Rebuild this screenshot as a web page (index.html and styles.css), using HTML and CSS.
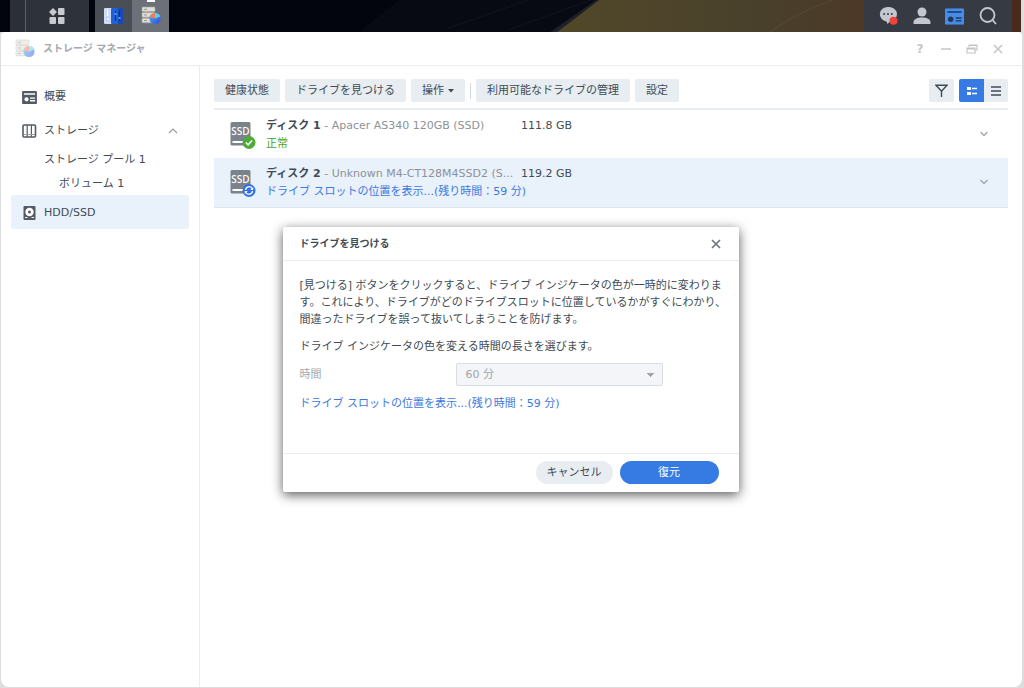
FILE: index.html
```
<!DOCTYPE html>
<html lang="ja">
<head>
<meta charset="utf-8">
<meta name="viewport" content="width=device-width, initial-scale=1">
<title>ストレージ マネージャ</title>
<link rel="stylesheet" href="styles.css">
</head>
<body>
<svg class="defs" aria-hidden="true">
  <defs>
    <linearGradient id="pie" x1="0" y1="0" x2="1" y2="1"><stop offset="0" stop-color="#49b4f5"/><stop offset="1" stop-color="#3048dc"/></linearGradient>
    <symbol id="manager" viewBox="0 0 20 20">
      <g fill="#dedfdc" stroke="#aaa99f" stroke-width=".6"><rect x="1" y="1" width="13" height="4.6" rx=".8"/><rect x="1" y="6.6" width="13" height="4.6" rx=".8"/><rect x="1" y="12.2" width="13" height="4.6" rx=".8"/></g>
      <path d="M3 3.4h3M3 9h3M3 14.6h3" stroke="#99958b" stroke-width="1"/>
      <path d="M5.5 1v15.8" stroke="#c2bfb5" stroke-width=".7"/>
      <circle cx="14" cy="12.500" r="5.6" fill="url(#pie)"/>
      <path d="M14 12.500V6.900A5.600 5.600 0 0 0 8.600 11Z" fill="#f08052"/>
      <path d="M14 12.500V6.900A5.600 5.600 0 0 1 19.300 10.500Z" fill="#5dcdef"/>
    </symbol>
    <symbol id="panel" viewBox="0 0 16 14"><path fill="currentColor" fill-rule="evenodd" d="M1 0h14a1 1 0 0 1 1 1v12a1 1 0 0 1-1 1H1a1 1 0 0 1-1-1V1a1 1 0 0 1 1-1ZM2 2.500v1.500h12V2.500ZM2.500 9a2.300 2.300 0 1 0 4.600 0a2.300 2.300 0 1 0-4.600 0ZM8.500 7v1.400H14V7ZM8.500 9.800v1.400H14V9.800Z"/></symbol>
    <symbol id="widget" viewBox="0 0 16 14"><rect width="16" height="14" rx="1" fill="#438df0"/><path d="M2 3.200h12M9 8.200h5M9 10.700h5" stroke="#25364f" stroke-width="1.200"/><circle cx="4.800" cy="9.400" r="2.300" fill="#25364f"/></symbol>
    <symbol id="ssd" viewBox="0 0 26 28">
      <path d="M2 0h17a1.500 1.500 0 0 1 1.500 1.500V22a1.500 1.500 0 0 1-1.500 1.500H2A1.500 1.500 0 0 1 .5 22V1.500A1.500 1.500 0 0 1 2 0Z" fill="#7a828a"/>
      <path d="M2.500 19H14v2H2.500Z" fill="#fff"/>
      <text x="10.500" y="13" text-anchor="middle" class="ssd-text">SSD</text>
    </symbol>
    <symbol id="down" viewBox="0 0 10 8"><path d="M1.500 2 5 5.500 8.500 2" fill="none" stroke="#a0a5aa" stroke-width="1.300"/></symbol>
  </defs>
</svg>

<header class="taskbar">
  <svg class="wallpaper" viewBox="0 0 1024 32" preserveAspectRatio="none" aria-hidden="true">
    <defs><linearGradient id="sand"><stop offset="0" stop-color="#514829"/><stop offset=".45" stop-color="#49402c"/><stop offset=".7" stop-color="#4d3727"/><stop offset="1" stop-color="#4a291e"/></linearGradient></defs>
    <path d="M0 0h1024v32H0Z" fill="#02050d"/>
    <path d="M400 0h202l-45 32H360Z" fill="#070a12"/>
    <path d="M450 28 530 0M510 30 592 0" stroke="#12151e"/>
    <path d="M598 0 552 32h8L602 0Z" fill="#20202a"/>
    <path d="M601 0h423v32H559Z" fill="url(#sand)"/>
    <path d="M772 32Q800 12 835 0" stroke="#564936" fill="none"/>
  </svg>
  <div class="task-left">
    <button class="main-menu" aria-label="メインメニュー"><svg width="18" height="16" viewBox="0 0 18 16" fill="#c7cad0"><path d="M5 0 9 4 5 8 1 4Z"/><rect x="10" y="0" width="6.500" height="7" rx="1"/><rect x="1.500" y="9" width="6.500" height="7" rx="1"/><rect x="10" y="9" width="6.500" height="7" rx="1"/></svg></button>
    <div class="apps">
      <button class="app" aria-label="コントロールパネル"><svg width="20" height="18" viewBox="0 0 20 18"><rect x="0" y="1" width="9" height="16" rx="1" fill="#cfdcf5"/><rect x="7" y="1" width="12" height="16" rx="1" fill="#2360d8"/><rect x="14" y="1" width="5" height="16" fill="#164bb5"/><circle cx="4" cy="12" r="1.800" fill="#f6f8fc" stroke="#96add5" stroke-width=".5"/><path d="M3.500 3v6" stroke="#fff"/><path d="M11.500 4v10M15.500 4v10" stroke="#102e78"/><path d="M10.500 7h2M14.500 11h2" stroke="#5a9cf0" stroke-width="2"/></svg></button>
      <button class="app app-active" aria-label="ストレージ マネージャ"><svg width="20" height="20"><use href="#manager"/></svg></button>
    </div>
  </div>
  <div class="task-right">
    <button class="tray" aria-label="通知"><svg width="20" height="20" viewBox="0 0 20 20"><path d="M9 1a8 7.300 0 0 1 2 14.500L8.500 18 7.500 15.500A8 7.300 0 0 1 9 1Z" fill="#c3c7d0"/><g fill="#383c44"><circle cx="5.200" cy="8" r="1"/><circle cx="9" cy="8" r="1"/><circle cx="12.800" cy="8" r="1"/></g><circle cx="14.500" cy="14.800" r="4" fill="#ee4439"/></svg></button>
    <button class="tray" aria-label="ユーザー"><svg width="20" height="20" viewBox="0 0 20 20" fill="#c3c7d0"><circle cx="10" cy="6" r="4.500"/><path d="M1.500 18v-1.500C1.500 13 5 11.500 10 11.500s8.500 1.500 8.500 5V18Z"/></svg></button>
    <button class="tray" aria-label="ウィジェット"><svg width="19" height="17" viewBox="0 0 16 14"><use href="#widget"/></svg></button>
    <button class="tray" aria-label="検索"><svg width="20" height="20" viewBox="0 0 20 20" fill="none" stroke="#c3c7d0" stroke-width="1.800"><circle cx="9.500" cy="9" r="7"/><path d="m14.500 14 3.500 4"/></svg></button>
  </div>
</header>

<div class="window">
  <div class="titlebar">
    <svg class="title-icon" width="20" height="20"><use href="#manager"/></svg>
    <h1 class="title">ストレージ マネージャ</h1>
    <div class="window-tools">
      <button class="tool" aria-label="ヘルプ">?</button>
      <button class="tool" aria-label="最小化"><svg width="12" height="12"><path d="M1 6h10" stroke="currentColor" stroke-width="1.500"/></svg></button>
      <button class="tool" aria-label="元のサイズ"><svg width="12" height="12" fill="none" stroke="currentColor" stroke-width="1.200"><path d="M3 4V2h8v5H9M1 5h8v5H1ZM1 6h8M3 2.500h8"/></svg></button>
      <button class="tool" aria-label="閉じる"><svg width="12" height="12"><path d="m2 2 8 8M10 2l-8 8" stroke="currentColor" stroke-width="1.600"/></svg></button>
    </div>
  </div>

  <div class="content">
    <nav class="sidebar">
      <a class="nav-item" href="#"><svg class="nav-icon" width="15" height="13"><use href="#panel"/></svg>概要</a>
      <a class="nav-item" href="#"><svg class="nav-icon" width="15" height="14" viewBox="0 0 15 14"><rect x="1" y="1" width="12.500" height="12" rx="1" fill="none" stroke="#545b63" stroke-width="1.600"/><path d="M5.200 1v12M9.400 1v12" stroke="#545b63" stroke-width="1.200"/><path d="M2 10.500h11" stroke="#9a9fa4" stroke-width="1"/></svg>ストレージ<svg class="nav-arrow" width="10" height="8"><path d="M1 6 5 2l4 4" fill="none" stroke="#959a9f" stroke-width="1.200"/></svg></a>
      <a class="nav-item nav-pool" href="#">ストレージ プール 1</a>
      <a class="nav-item nav-volume" href="#">ボリューム 1</a>
      <a class="nav-item nav-current" href="#" aria-current="page"><svg class="nav-icon" width="15" height="14" viewBox="0 0 15 14"><rect x="1.500" width="12" height="14" rx="1" fill="#545b63"/><circle cx="7.500" cy="6" r="4.200" fill="#fff"/><circle cx="7.500" cy="6" r="1.500" fill="#545b63"/><path d="M3 11.500h2.500M9.500 11.500H12" stroke="#fff"/></svg>HDD/SSD</a>
    </nav>

    <main class="main">
      <div class="toolbar">
        <button class="button">健康状態</button>
        <button class="button">ドライブを見つける</button>
        <button class="button button-menu">操作<svg width="6" height="4"><path d="M0 0h6L3 3.500Z" fill="#414b55"/></svg></button>
        <span class="separator"></span>
        <button class="button">利用可能なドライブの管理</button>
        <button class="button">設定</button>
        <div class="view-tools">
          <button class="icon-button filter" aria-label="フィルター"><svg width="13" height="14" fill="none" stroke="#414b55" stroke-width="1.400"><path d="M1 1.200h11L6.500 7.200ZM6.500 6.500V13"/></svg></button>
          <div class="view-switch">
            <button class="icon-button view-active" aria-label="詳細表示"><svg width="12" height="10" fill="#fff"><path d="M1 1h4v3H1ZM1 6h4v3H1ZM6 1.700h5v1.500H6ZM6 6.700h5v1.500H6Z"/></svg></button>
            <button class="icon-button view-list" aria-label="リスト表示"><svg width="10" height="10"><path d="M0 1h10M0 5h10M0 9h10" stroke="#414b55" stroke-width="1.400"/></svg></button>
          </div>
        </div>
      </div>

      <ul class="drives">
        <li class="drive">
          <svg class="drive-icon" width="26" height="28"><use href="#ssd"/><circle cx="19" cy="20.500" r="6.500" fill="#50aa37"/><path d="m15.800 20.500 2.300 2.300 4-4.300" fill="none" stroke="#fff" stroke-width="1.500"/></svg>
          <div class="drive-info">
            <p class="drive-name"><b>ディスク 1</b> - Apacer AS340 120GB (SSD)</p>
            <p class="drive-state state-normal">正常</p>
          </div>
          <span class="capacity">111.8 GB</span>
          <button class="expand" aria-label="ディスク 1 の詳細"><svg width="10" height="8"><use href="#down"/></svg></button>
        </li>
        <li class="drive drive-selected">
          <svg class="drive-icon" width="26" height="28"><use href="#ssd"/><circle cx="19" cy="20.500" r="6.500" fill="#3274e4"/><path d="M15.500 20a3.600 3.600 0 0 1 6.700-1.500M22.500 21a3.600 3.600 0 0 1-6.700 1.500" fill="none" stroke="#fff" stroke-width="1.300"/><path d="M23.200 17v2.900h-3ZM14.800 24v-2.900h3Z" fill="#fff"/></svg>
          <div class="drive-info">
            <p class="drive-name"><b>ディスク 2</b> - Unknown M4-CT128M4SSD2 (S...</p>
            <p class="drive-state state-locating">ドライブ スロットの位置を表示...(残り時間：59 分)</p>
          </div>
          <span class="capacity">119.2 GB</span>
          <button class="expand" aria-label="ディスク 2 の詳細"><svg width="10" height="8"><use href="#down"/></svg></button>
        </li>
      </ul>
    </main>
  </div>

  <div class="overlay">
    <section class="dialog" role="dialog" aria-labelledby="dialog-title">
      <div class="dialog-header">
        <h2 class="dialog-title" id="dialog-title">ドライブを見つける</h2>
        <button class="dialog-close" aria-label="閉じる"><svg width="10" height="10"><path d="m1 1 8 8M9 1 1 9" stroke="#6f7780" stroke-width="1.700"/></svg></button>
      </div>
      <div class="dialog-body">
        <p class="dialog-text">[見つける] ボタンをクリックすると、ドライブ インジケータの色が一時的に変わります。これにより、ドライブがどのドライブスロットに位置しているかがすぐにわかり、間違ったドライブを誤って抜いてしまうことを防げます。</p>
        <p class="dialog-text">ドライブ インジケータの色を変える時間の長さを選びます。</p>
        <div class="field">
          <label class="field-label" for="duration">時間</label>
          <select class="select" id="duration" disabled><option>60 分</option></select>
        </div>
        <p class="dialog-status">ドライブ スロットの位置を表示...(残り時間：59 分)</p>
      </div>
      <div class="dialog-footer">
        <button class="pill">キャンセル</button>
        <button class="pill pill-primary">復元</button>
      </div>
    </section>
  </div>
</div>
</body>
</html>
```

FILE: styles.css
```
* { box-sizing: border-box; }

body {
  margin: 0;
  min-height: 100vh;
  display: flex;
  flex-direction: column;
  background: #dcdddd;
  color: #414b55;
  font: 11px/16px "DejaVu Sans", "Noto Sans CJK JP", sans-serif;
}

h1, h2, p, ul { margin: 0; padding: 0; }
button { margin: 0; padding: 0; border: 0; background: none; color: inherit; font: inherit; }
svg { display: block; flex: none; }
.defs { position: absolute; width: 0; height: 0; }
.ssd-text { fill: #fff; font: 500 10px "Noto Sans", sans-serif; }

/* Taskbar */
.taskbar {
  position: relative;
  height: 32px;
  margin-right: 3px;
  display: flex;
  justify-content: space-between;
  background: #02050d;
}
.wallpaper { position: absolute; inset: 0; width: 100%; height: 100%; }
.task-left { position: relative; display: flex; gap: 6px; padding-left: 10px; }
.main-menu {
  width: 79px;
  padding-left: 14px;
  display: grid;
  place-items: center;
  background: linear-gradient(90deg, #2b3038 15px, #5b6068 15px, #5b6068 16px, #2d323b 16px);
}
.apps { display: flex; }
.app { width: 37px; display: grid; place-items: center; background: #4a4e56; }
.app-active { background: linear-gradient(#fff, #fff) 50% 0 / 8px 2px no-repeat #6c7078; }
.task-right {
  position: relative;
  display: flex;
  padding: 0 8px 0 8px;
  margin-right: 9px;
  background: #363a42;
}
.tray { width: 33px; display: grid; place-items: center; }

/* Window */
.window {
  position: relative;
  flex: 1;
  display: flex;
  flex-direction: column;
  margin: 0 2px 1px 1px;
  border-radius: 4px 4px 8px 8px;
  background: #fff;
}
.titlebar {
  height: 34px;
  display: flex;
  align-items: center;
  gap: 8px;
  padding: 0 18px 0 14px;
  border-bottom: 1px solid #e8edf1;
}
.title-icon { opacity: .5; }
.title { flex: 1; color: #a5a9ad; font-size: 10px; font-weight: 700; }
.window-tools { display: flex; gap: 14px; color: #c3c6c9; }
.tool { width: 12px; height: 16px; display: grid; place-items: center; font-size: 12px; font-weight: 700; }
.content { flex: 1; display: flex; }

/* Sidebar */
.sidebar {
  width: 199px;
  padding: 13px 10px;
  border-right: 1px solid #e8edf1;
}
.nav-item {
  height: 34px;
  display: flex;
  align-items: center;
  gap: 7px;
  padding: 2px 11px 0;
  border-radius: 3px;
  color: #414b55;
  text-decoration: none;
}
.nav-icon { color: #545b63; }
.nav-arrow { margin-left: auto; }
.nav-pool { height: 24px; padding-left: 33px; }
.nav-volume { height: 24px; padding-left: 48px; }
.nav-current { background: #e9f1fb; }

/* Toolbar */
.main { flex: 1; min-width: 0; padding: 13px 14px; }
.toolbar {
  display: flex;
  align-items: center;
  gap: 5px;
  padding-bottom: 6px;
  border-bottom: 2px solid #e9edf1;
}
.button {
  height: 23px;
  padding: 0 11px;
  border-radius: 2px;
  background: #e8edf1;
  white-space: nowrap;
}
.button-menu { display: flex; align-items: center; gap: 4px; }
.separator { width: 1px; height: 16px; background: #d5dadf; }
.view-tools { display: flex; gap: 5px; margin-left: auto; }
.view-switch { display: flex; border-radius: 2px; overflow: hidden; }
.icon-button { width: 25px; height: 23px; display: grid; place-items: center; background: #e8edf1; }
.filter { border-radius: 2px; }
.view-active { background: #367ae3; }
.view-list { width: 24px; }

/* Drives */
.drives { list-style: none; }
.drive {
  height: 48px;
  display: flex;
  align-items: flex-start;
  padding: 8px 19px 0 16px;
}
.drive-selected { height: 50px; background: #e9f1fb; border-bottom: 1px solid #dce5f1; }
.drive-icon { margin-top: 4px; }
.drive-info { width: 248px; margin-left: 10px; }
.drive-name { white-space: nowrap; color: #8c9298; }
.drive-name b { color: #414b55; }
.drive-state { margin-top: 2px; white-space: nowrap; }
.state-normal { color: #43a52c; }
.state-locating { color: #3c79e0; }
.capacity { margin-left: 7px; }
.expand { margin: 12px 0 0 auto; }

/* Dialog */
.overlay { position: absolute; inset: 0; display: grid; place-items: center; padding-right: 2px; }
.dialog {
  width: 456px;
  max-width: 100%;
  border-radius: 2px;
  background: #fff;
  box-shadow: 0 3px 12px rgba(0, 0, 0, .65);
}
.dialog-header {
  height: 34px;
  display: flex;
  align-items: center;
  justify-content: space-between;
  padding: 0 18px 0 17px;
  border-bottom: 1px solid #e8edf1;
}
.dialog-title { font-size: 10px; font-weight: 700; }
.dialog-body { padding: 16px 10px 41px 17px; }
.dialog-text { margin-bottom: 10px; line-height: 17px; }
.field { display: flex; align-items: center; margin: -2px 0 10px; }
.field-label { width: 156px; color: #a5a9ad; }
.select {
  appearance: none;
  width: 207px;
  height: 23px;
  padding: 0 9px;
  border: 1px solid #d9dee4;
  border-radius: 2px;
  background:
    linear-gradient(to bottom left, #a0a5aa 50%, transparent 50%) right 11px center / 4px 4px no-repeat,
    linear-gradient(to bottom right, #a0a5aa 50%, transparent 50%) right 7px center / 4px 4px no-repeat,
    #f3f5f9;
  color: #a0a5aa;
  opacity: 1;
  font: inherit;
}
.dialog-status { color: #3c79e0; }
.dialog-footer {
  display: flex;
  justify-content: flex-end;
  gap: 7px;
  padding: 7px 20px 8px;
  border-top: 1px solid #e8edf1;
}
.pill { height: 23px; padding: 0 11px; border-radius: 12px; background: #e8edf1; }
.pill-primary { width: 99px; background: #367ae3; color: #fff; }
```
